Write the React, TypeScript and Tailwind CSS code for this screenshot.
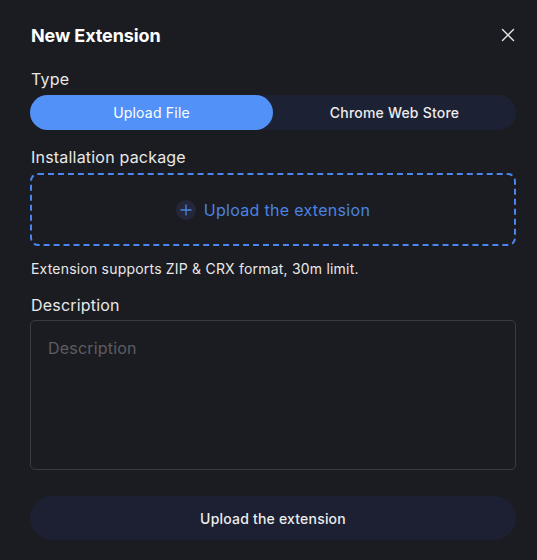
import React from "react";

export default function App() {
  return (
    <div
      className="w-[537px] h-[560px] bg-[#1b1c21] text-white pl-[30px] pr-[21px] pt-[22px]"
      style={{ fontFamily: "Inter, 'Noto Sans', sans-serif" }}
    >
      <div className="flex items-center justify-between h-[26px]">
        <div className="text-[18px] font-bold tracking-[-0.1px] pl-[1px]">New Extension</div>
        <svg width="14" height="14" viewBox="0 0 14 14" className="mr-[1px]">
          <path d="M1.5 1.5 L12.5 12.5 M12.5 1.5 L1.5 12.5" stroke="#e6e6e6" strokeWidth="1.4" strokeLinecap="round" />
        </svg>
      </div>

      <div className="mt-[19px] pl-[1px] text-[16px] leading-[24px] text-[#e8e8e8] tracking-[0.2px]">Type</div>
      <div className="mt-[4px] flex h-[35px] rounded-full bg-[#1d2134] text-[14px] tracking-[0.2px]">
        <div className="w-[243px] rounded-full bg-[#5291f7] flex items-center justify-center text-white">
          Upload File
        </div>
        <div className="flex-1 flex items-center justify-center text-[#ececec] font-medium">
          Chrome Web Store
        </div>
      </div>

      <div className="mt-[15px] pl-[1px] text-[16px] leading-[24px] text-[#e8e8e8] tracking-[0.2px]">Installation package</div>
      <div className="mt-[4px] h-[73px] rounded-[8px] border-2 border-dashed border-[#4a86ee] flex items-center justify-center gap-[8px]">
        <div className="w-[20px] h-[20px] rounded-full bg-[#232739] flex items-center justify-center">
          <svg width="12" height="12" viewBox="0 0 12 12">
            <path d="M6 0.5 V11.5 M0.5 6 H11.5" stroke="#4a84e0" strokeWidth="1.3" />
          </svg>
        </div>
        <div className="text-[16px] text-[#4a84e0] tracking-[0.3px]">Upload the extension</div>
      </div>

      <div className="mt-[13px] pl-[1px] text-[14px] leading-[20px] text-[#e8e8e8] tracking-[0.2px]">
        Extension supports ZIP &amp; CRX format, 30m limit.
      </div>

      <div className="mt-[14px] pl-[1px] text-[16px] leading-[24px] text-[#e8e8e8] tracking-[0.2px]">Description</div>
      <div className="mt-[3px] h-[150px] rounded-[5px] border border-[#393a40] px-[17px] pt-[15px]">
        <div className="text-[16px] leading-[24px] text-[#5c5d62] tracking-[0.2px]">Description</div>
      </div>

      <div className="mt-[26px] h-[44px] rounded-full bg-[#1c2032] flex items-center justify-center text-[14px] font-medium text-[#ededed] tracking-[0.2px]">
        Upload the extension
      </div>
    </div>
  );
}
